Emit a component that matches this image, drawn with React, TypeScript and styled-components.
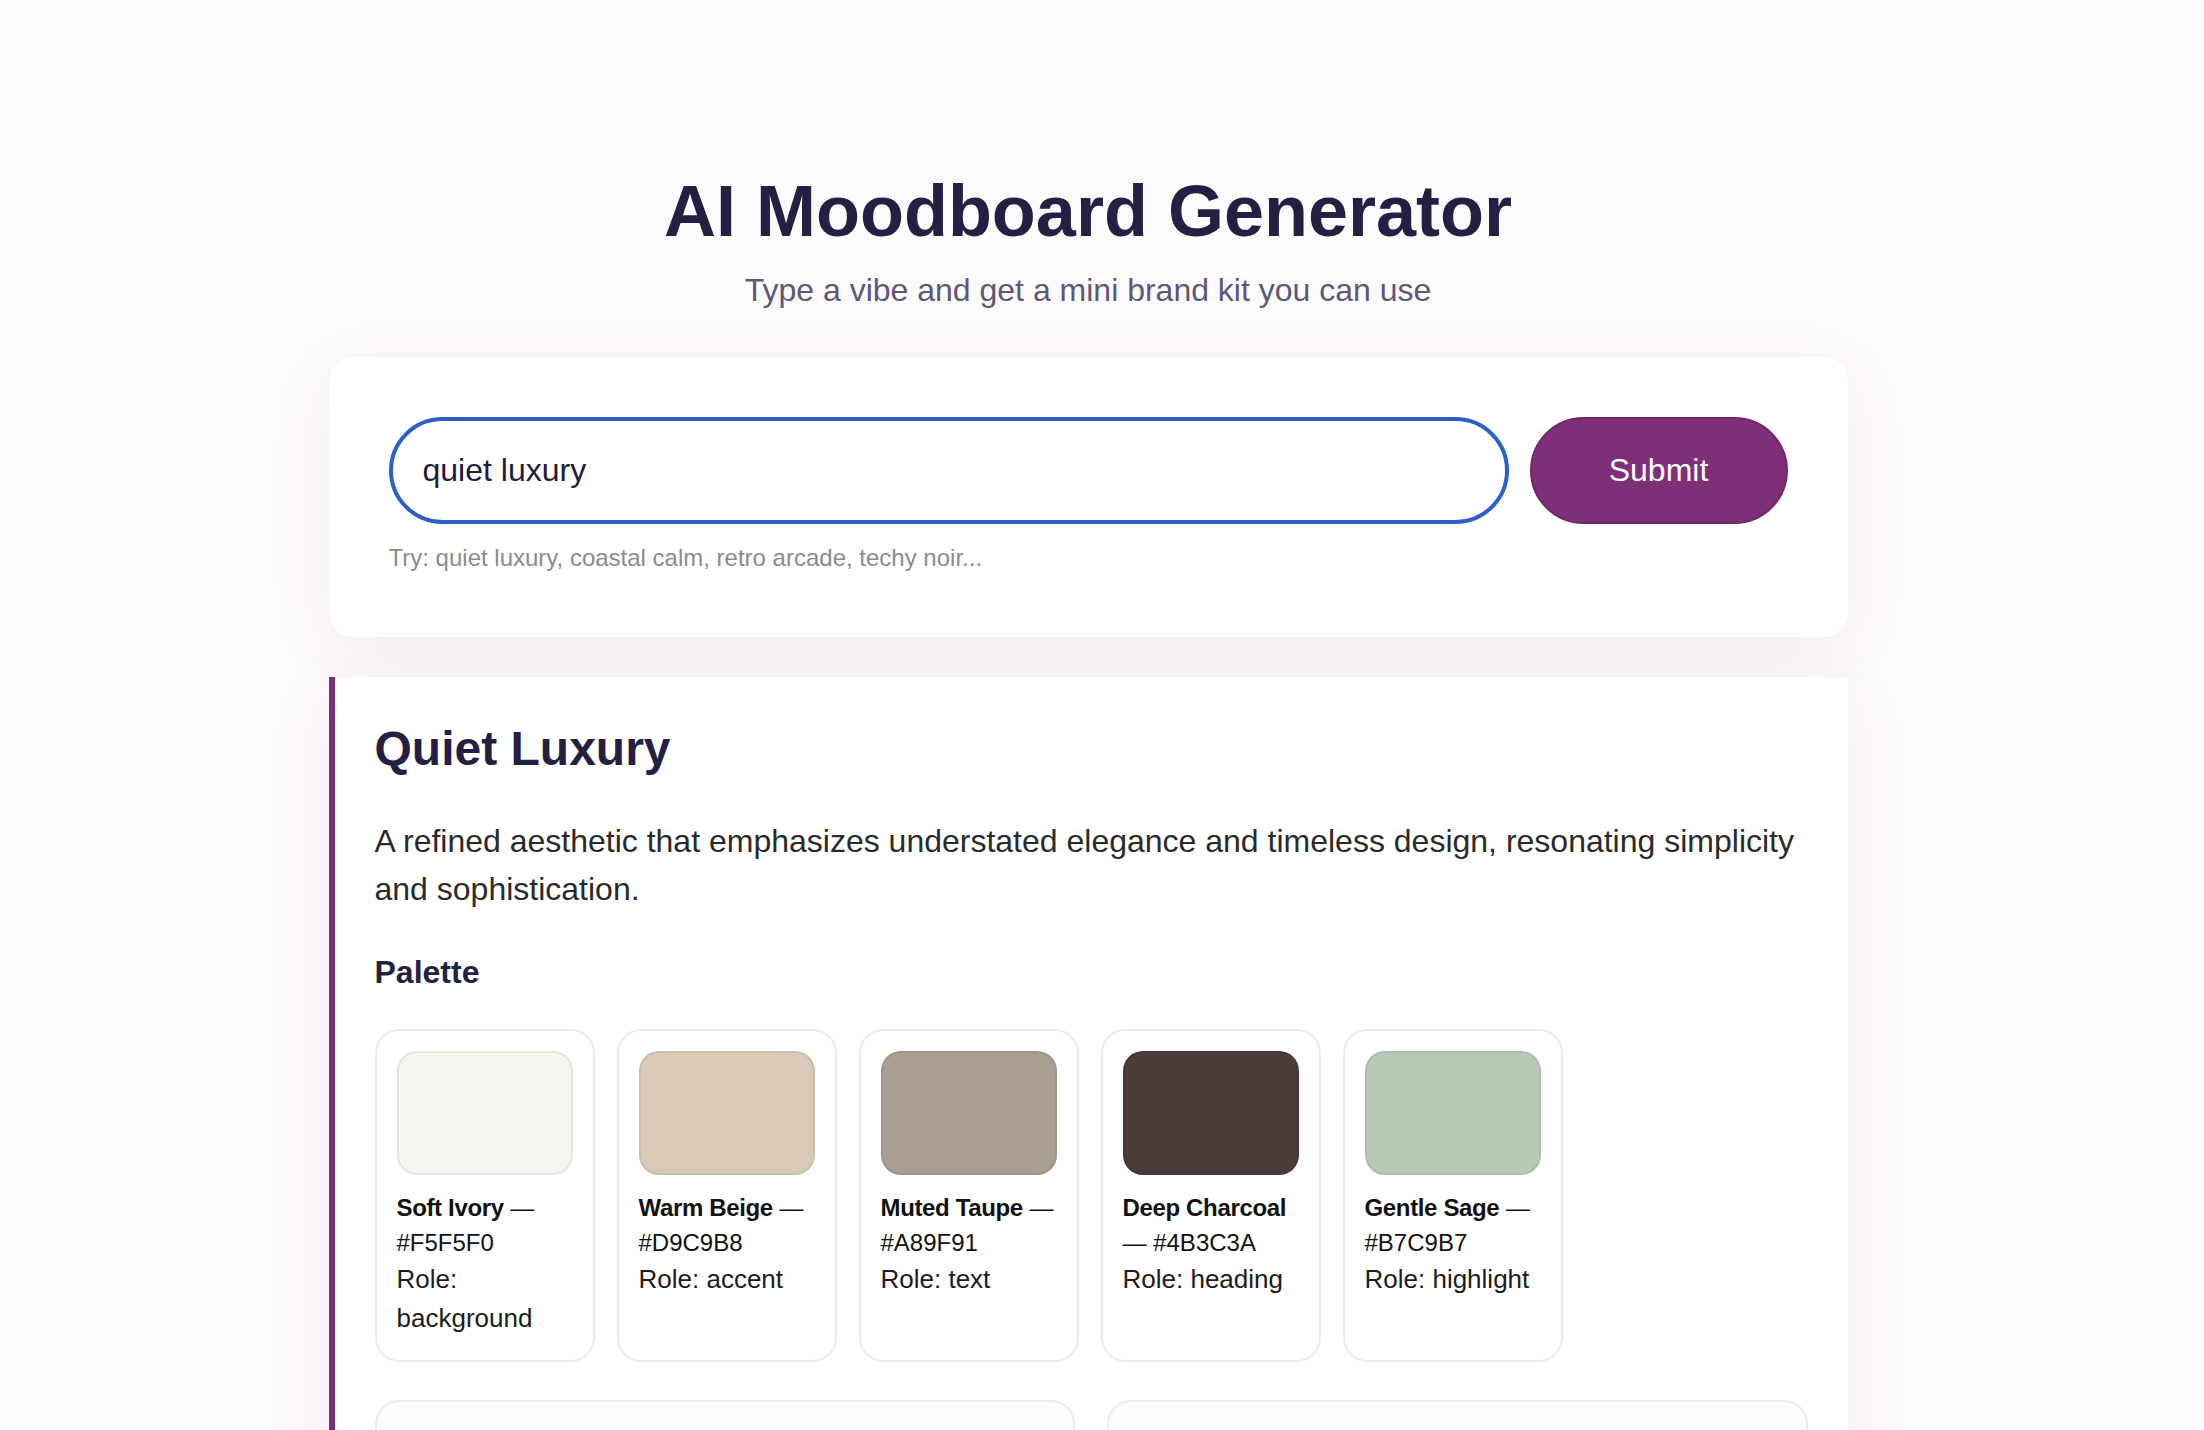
import React from 'react';
import styled, { createGlobalStyle } from 'styled-components';

type Swatch = {
  name: string;
  hex: string;
  role: string;
};

const palette: Swatch[] = [
  { name: 'Soft Ivory', hex: '#F5F5F0', role: 'background' },
  { name: 'Warm Beige', hex: '#D9C9B8', role: 'accent' },
  { name: 'Muted Taupe', hex: '#A89F91', role: 'text' },
  { name: 'Deep Charcoal', hex: '#4B3C3A', role: 'heading' },
  { name: 'Gentle Sage', hex: '#B7C9B7', role: 'highlight' },
];

const GlobalStyle = createGlobalStyle`
  html {
    scrollbar-width: none;
  }
  html::-webkit-scrollbar {
    display: none;
  }
  body {
    margin: 0;
    background: #fdfafc;
    font-family: 'Liberation Sans', Arial, Helvetica, sans-serif;
    color: #2a2a2a;
  }
`;

export default function App() {
  return (
    <>
      <GlobalStyle />
      <StyledPage>
        <StyledContainer>
          <StyledHeader>
            <h1>AI Moodboard Generator</h1>
            <p>Type a vibe and get a mini brand kit you can use</p>
          </StyledHeader>

          <StyledFormCard>
            <StyledFormRow>
              <StyledInput defaultValue="quiet luxury" />
              <StyledSubmit type="button">Submit</StyledSubmit>
            </StyledFormRow>
            <StyledHint>Try: quiet luxury, coastal calm, retro arcade, techy noir...</StyledHint>
          </StyledFormCard>

          <StyledResult>
            <h2>Quiet Luxury</h2>
            <StyledDescription>
              A refined aesthetic that emphasizes understated elegance and timeless design,
              resonating simplicity and sophistication.
            </StyledDescription>

            <StyledSectionTitle>Palette</StyledSectionTitle>
            <StyledPalette>
              {palette.map((swatch) => (
                <StyledSwatchCard key={swatch.hex}>
                  <StyledSwatch color={swatch.hex} />
                  <StyledSwatchName>
                    <strong>{swatch.name}</strong> — {swatch.hex}
                  </StyledSwatchName>
                  <StyledSwatchRole>Role: {swatch.role}</StyledSwatchRole>
                </StyledSwatchCard>
              ))}
            </StyledPalette>

            <StyledDetails>
              <StyledDetailCard>
                <StyledSectionTitle>Typography</StyledSectionTitle>
                <StyledDetailText>Headings: Playfair Display</StyledDetailText>
                <StyledDetailText>Body: Inter</StyledDetailText>
              </StyledDetailCard>
              <StyledDetailCard>
                <StyledSectionTitle>Mood words</StyledSectionTitle>
                <StyledDetailText>calm, refined, timeless, soft, tailored</StyledDetailText>
              </StyledDetailCard>
            </StyledDetails>
          </StyledResult>
        </StyledContainer>
      </StyledPage>
    </>
  );
}

const StyledPage = styled.div`
  min-height: 100vh;
  padding: 170px 28px 120px 0;
  box-sizing: border-box;
`;

const StyledContainer = styled.main`
  max-width: 1519px;
  margin: 0 auto;
  display: flex;
  flex-direction: column;
`;

const StyledHeader = styled.header`
  text-align: center;
  h1 {
    margin: 0;
    font-size: 72px;
    line-height: 83px;
    font-weight: 700;
    color: #241f43;
  }
  p {
    margin: 19px 0 0;
    font-size: 32px;
    line-height: 37px;
    color: #5c5878;
  }
`;

const StyledFormCard = styled.section`
  margin-top: 48px;
  background: #ffffff;
  border-radius: 24px;
  padding: 60px 60px 65px;
  box-shadow: 0 16px 70px rgba(90, 50, 100, 0.07);
`;

const StyledFormRow = styled.div`
  display: flex;
  gap: 21px;
`;

const StyledInput = styled.input`
  flex: 1;
  height: 107px;
  box-sizing: border-box;
  padding: 0 30px;
  border: 4px solid #2b5fcb;
  border-radius: 999px;
  font-family: inherit;
  font-size: 32px;
  color: #1f1b3a;
  background: #ffffff;
  outline: none;
`;

const StyledSubmit = styled.button`
  width: 258px;
  height: 107px;
  border: 2px solid #6f2869;
  border-radius: 999px;
  background: #7f2f77;
  color: #ffffff;
  font-family: inherit;
  font-size: 32px;
  font-weight: 500;
  cursor: pointer;
`;

const StyledHint = styled.div`
  margin-top: 20px;
  font-size: 24px;
  line-height: 28px;
  color: #8b8b8b;
`;

const StyledResult = styled.section`
  margin-top: 40px;
  background: #ffffff;
  border-left: 6px solid #7e2f78;
  padding: 44px 40px 60px;
  box-shadow: 0 16px 70px rgba(90, 50, 100, 0.07);
  h2 {
    margin: 0;
    font-size: 48px;
    line-height: 56px;
    font-weight: 700;
    color: #241f43;
  }
`;

const StyledDescription = styled.p`
  margin: 40px 0 0;
  font-size: 32px;
  line-height: 48px;
  color: #2a2a2a;
`;

const StyledSectionTitle = styled.h3`
  margin: 41px 0 0;
  font-size: 32px;
  line-height: 37px;
  font-weight: 700;
  color: #241f43;
`;

const StyledPalette = styled.div`
  margin-top: 38px;
  display: flex;
  gap: 22px;
`;

const StyledSwatchCard = styled.div`
  width: 220px;
  box-sizing: border-box;
  padding: 20px 20px 22px;
  border: 2px solid #ececec;
  border-radius: 24px;
  background: #ffffff;
`;

const StyledSwatch = styled.div<{ color: string }>`
  height: 124px;
  box-sizing: border-box;
  border-radius: 20px;
  border: 2px solid rgba(0, 0, 0, 0.06);
  background: ${({ color }) => color};
`;

const StyledSwatchName = styled.div`
  margin-top: 15px;
  font-size: 24px;
  line-height: 35px;
  color: #111111;
  strong {
    font-weight: 700;
    letter-spacing: -0.35px;
  }
`;

const StyledSwatchRole = styled.div`
  font-size: 26px;
  line-height: 39px;
  color: #1c1c1c;
`;

const StyledDetails = styled.div`
  margin-top: 38px;
  display: grid;
  grid-template-columns: 1fr 1fr;
  gap: 32px;
`;

const StyledDetailCard = styled.div`
  padding: 40px 36px 36px;
  border: 2px solid #ececec;
  border-radius: 24px;
  background: #fcfcfc;
  h3 {
    margin-top: 0;
  }
`;

const StyledDetailText = styled.div`
  margin-top: 16px;
  font-size: 28px;
  line-height: 40px;
  color: #2a2a2a;
`;
